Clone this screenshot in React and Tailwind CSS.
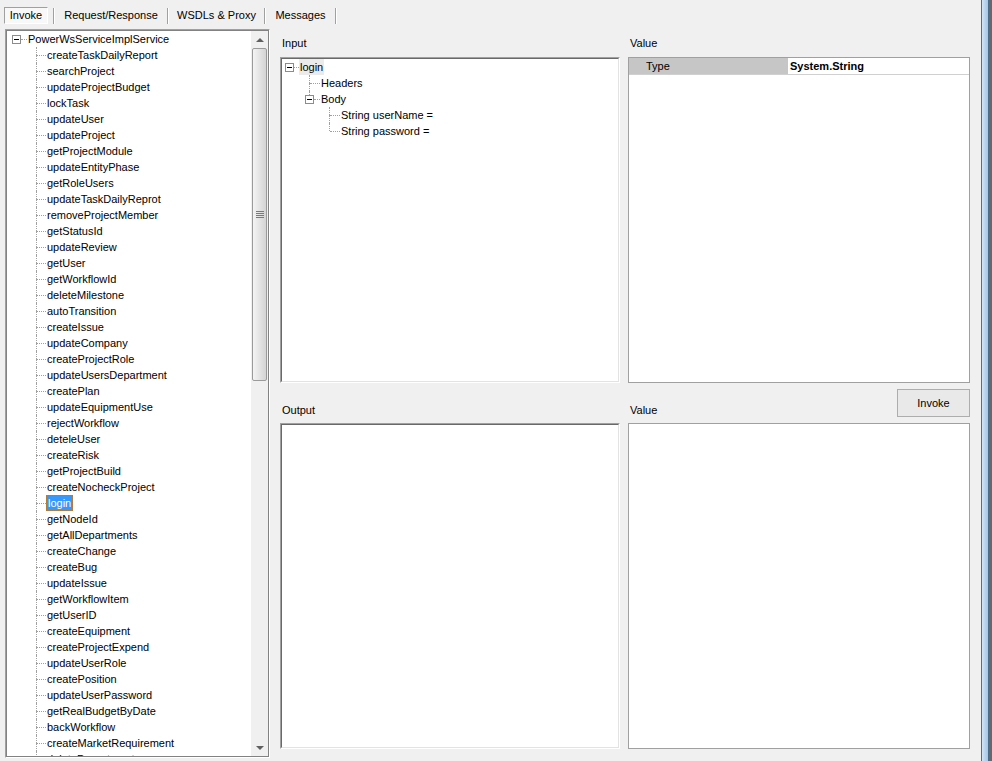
import React from 'react';

const methods = [
  'createTaskDailyReport', 'searchProject', 'updateProjectBudget', 'lockTask', 'updateUser',
  'updateProject', 'getProjectModule', 'updateEntityPhase', 'getRoleUsers', 'updateTaskDailyReprot',
  'removeProjectMember', 'getStatusId', 'updateReview', 'getUser', 'getWorkflowId',
  'deleteMilestone', 'autoTransition', 'createIssue', 'updateCompany', 'createProjectRole',
  'updateUsersDepartment', 'createPlan', 'updateEquipmentUse', 'rejectWorkflow', 'deteleUser',
  'createRisk', 'getProjectBuild', 'createNocheckProject', 'login', 'getNodeId',
  'getAllDepartments', 'createChange', 'createBug', 'updateIssue', 'getWorkflowItem',
  'getUserID', 'createEquipment', 'createProjectExpend', 'updateUserRole', 'createPosition',
  'updateUserPassword', 'getRealBudgetByDate', 'backWorkflow', 'createMarketRequirement', 'deleteDepartment',
];

function Box() {
  return (
    <div className="w-[9px] h-[9px] shrink-0 border border-[#8c8c8c] bg-white flex items-center justify-center">
      <div className="w-[5px] h-[1px] bg-black" />
    </div>
  );
}

// tree connector for a leaf row
function Cell({ last, narrow }) {
  return (
    <div className={`${narrow ? 'w-[19px]' : 'w-[20px]'} h-[16px] flex shrink-0`}>
      <div className="w-[10px] flex flex-col">
        <div className="h-[8px] border-r border-dotted border-[#a0a0a0]" />
        <div className={last ? 'h-[8px]' : 'h-[8px] border-r border-dotted border-[#a0a0a0]'} />
      </div>
      <div className="flex-1 flex flex-col">
        <div className="h-[8px]" />
        <div className="border-t border-dotted border-[#a0a0a0]" />
      </div>
    </div>
  );
}

function Sep() {
  return (
    <div className="flex h-[16px]">
      <div className="w-[1px] bg-[#a0a0a0]" />
      <div className="w-[1px] bg-white" />
    </div>
  );
}

function Sunken({ children }) {
  return (
    <div className="w-[340px] h-full border border-t-[#a0a0a0] border-l-[#a0a0a0] border-r-white border-b-white">
      <div className="w-full h-full bg-white border border-t-[#696969] border-l-[#696969] border-r-[#e3e3e3] border-b-[#e3e3e3] overflow-hidden">
        {children}
      </div>
    </div>
  );
}

export default function App() {
  return (
    <div className="w-[992px] h-[761px] bg-[#f0f0f0] flex overflow-hidden text-[11px] leading-[13px] text-black font-['Liberation_Sans',Arial,sans-serif]">
      <div className="w-[981px] flex flex-col">
        {/* tab strip */}
        <div className="h-[29px] flex items-center pt-[2px] pl-[4px] shrink-0">
          <div className="w-[44px] h-[17px] flex items-center justify-center bg-[#f8f8f8] border border-t-[#a0a0a0] border-l-[#a0a0a0] border-r-white border-b-white">
            Invoke
          </div>
          <div className="ml-[5px]"><Sep /></div>
          <div className="w-[112px] text-center">Request/Response</div>
          <Sep />
          <div className="w-[95px] text-center">WSDLs &amp; Proxy</div>
          <Sep />
          <div className="w-[69px] text-center">Messages</div>
          <Sep />
        </div>

        <div className="flex">
          {/* service tree */}
          <div className="ml-[5px] w-[265px] h-[729px] border border-t-[#a0a0a0] border-l-[#a0a0a0] border-r-white border-b-white shrink-0">
            <div className="w-full h-full bg-white border border-[#828282] flex">
              <div className="flex-1 overflow-hidden">
                <div className="h-[16px] flex items-center">
                  <div className="ml-[5px]"><Box /></div>
                  <div className="w-[6px] border-t border-dotted border-[#a0a0a0]" />
                  <div className="px-[1px] whitespace-nowrap">PowerWsServiceImplService</div>
                </div>
                <div className="pl-[20px]">
                  {methods.map((m) => (
                    <div key={m} className="h-[16px] flex">
                      <Cell narrow />
                      {m === 'login' ? (
                        <div className="h-[16px] flex items-center px-[1px] bg-[#3399ff] text-white border border-dotted border-[#b07a3a] whitespace-nowrap">
                          {m}
                        </div>
                      ) : (
                        <div className="h-[16px] flex items-center px-[1px] whitespace-nowrap">{m}</div>
                      )}
                    </div>
                  ))}
                </div>
              </div>
              {/* scrollbar */}
              <div className="w-[17px] h-full bg-[#f0f0f0] flex flex-col shrink-0">
                <div className="h-[17px] flex items-center justify-center">
                  <div className="w-0 h-0 border-l-[4px] border-r-[4px] border-b-[4px] border-l-transparent border-r-transparent border-b-[#606060]" />
                </div>
                <div className="flex-1 px-[1px]">
                  <div className="h-[333px] rounded-[2px] border border-[#9a9a9a] bg-gradient-to-r from-[#f4f4f4] to-[#d4d4d4] flex items-center justify-center">
                    <div className="w-[8px] flex flex-col gap-[1px]">
                      <div className="h-[1px] bg-[#7a7a7a]" />
                      <div className="h-[1px] bg-[#7a7a7a]" />
                      <div className="h-[1px] bg-[#7a7a7a]" />
                      <div className="h-[1px] bg-[#7a7a7a]" />
                    </div>
                  </div>
                </div>
                <div className="h-[17px] flex items-center justify-center">
                  <div className="w-0 h-0 border-l-[4px] border-r-[4px] border-t-[4px] border-l-transparent border-r-transparent border-t-[#606060]" />
                </div>
              </div>
            </div>
          </div>

          {/* right area */}
          <div className="ml-[10px] w-[690px] flex flex-col">
            <div className="h-[28px] flex items-center pt-[1px]">
              <div className="w-[340px] pl-[2px]">Input</div>
              <div className="ml-[8px] pl-[2px]">Value</div>
            </div>
            <div className="h-[326px] flex">
              <Sunken>
                <div className="h-[16px] flex items-center">
                  <div className="ml-[3px]"><Box /></div>
                  <div className="w-[5px] border-t border-dotted border-[#a0a0a0]" />
                  <div className="h-[16px] flex items-center px-[1px] bg-[#ebebeb]">login</div>
                </div>
                <div className="pl-[18px]">
                  <div className="h-[16px] flex">
                    <Cell />
                    <div className="flex items-center px-[1px]">Headers</div>
                  </div>
                  <div className="h-[16px] flex">
                    <div className="w-[20px] flex flex-col shrink-0">
                      <div className="w-[10px] h-[4px] border-r border-dotted border-[#a0a0a0]" />
                      <div className="h-[9px] flex items-center">
                        <div className="ml-[5px]"><Box /></div>
                        <div className="flex-1 border-t border-dotted border-[#a0a0a0]" />
                      </div>
                    </div>
                    <div className="flex items-center px-[1px]">Body</div>
                  </div>
                  <div className="pl-[20px]">
                    <div className="h-[16px] flex">
                      <Cell />
                      <div className="flex items-center px-[1px] whitespace-nowrap">String userName =</div>
                    </div>
                    <div className="h-[16px] flex">
                      <Cell last />
                      <div className="flex items-center px-[1px] whitespace-nowrap">String password =</div>
                    </div>
                  </div>
                </div>
              </Sunken>
              <div className="ml-[8px] w-[342px] h-full border border-[#a0a0a0] bg-white">
                <div className="h-[17px] flex border-b border-[#d0d0d0]">
                  <div className="w-[159px] bg-[#c6c6c6] pl-[17px] flex items-center">Type</div>
                  <div className="flex-1 pl-[2px] flex items-center font-bold">System.String</div>
                </div>
              </div>
            </div>
            <div className="h-[40px] flex">
              <div className="w-[340px] pl-[2px] flex items-end pb-[6px]">Output</div>
              <div className="ml-[8px] w-[342px] flex justify-between">
                <div className="self-end pb-[6px] pl-[2px]">Value</div>
                <div className="self-start mt-[6px] w-[73px] h-[28px] border border-[#adadad] bg-[#e9e9e9] flex items-center justify-center">
                  Invoke
                </div>
              </div>
            </div>
            <div className="h-[326px] flex">
              <Sunken />
              <div className="ml-[8px] w-[342px] h-full border border-[#a0a0a0] bg-white" />
            </div>
          </div>
        </div>
      </div>

      {/* window edge */}
      <div className="w-[1px] bg-[#5f6b77]" />
      <div className="w-[6px] bg-gradient-to-r from-[#d3e6f7] via-[#b8d4ee] to-[#a6c6e6]" />
      <div className="w-[1px] bg-[#4d6a86]" />
      <div className="w-[3px] bg-[#686868]" />
    </div>
  );
}
